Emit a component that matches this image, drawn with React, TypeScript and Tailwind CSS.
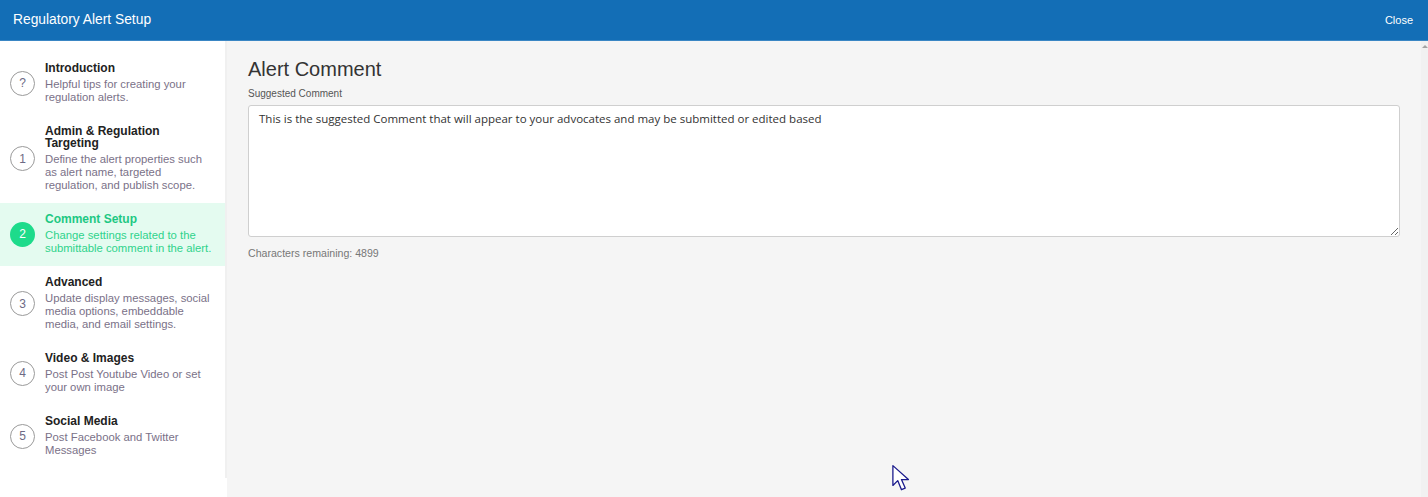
import React from 'react'

type Step = {
  badge: string
  title: string
  desc: string
  active?: boolean
}

const STEPS: Step[] = [
  { badge: '?', title: 'Introduction', desc: 'Helpful tips for creating your regulation alerts.' },
  {
    badge: '1',
    title: 'Admin & Regulation Targeting',
    desc: 'Define the alert properties such as alert name, targeted regulation, and publish scope.',
  },
  {
    badge: '2',
    title: 'Comment Setup',
    desc: 'Change settings related to the submittable comment in the alert.',
    active: true,
  },
  {
    badge: '3',
    title: 'Advanced',
    desc: 'Update display messages, social media options, embeddable media, and email settings.',
  },
  { badge: '4', title: 'Video & Images', desc: 'Post Post Youtube Video or set your own image' },
  { badge: '5', title: 'Social Media', desc: 'Post Facebook and Twitter Messages' },
]

function StepItem({ step }: { step: Step }) {
  return (
    <div
      className={
        step.active
          ? 'flex items-center bg-[#e4fbf0] pb-[11px] pl-[10px] pt-[10px]'
          : 'flex items-center pb-[11px] pl-[10px] pt-[10px]'
      }
    >
      <div
        className={
          step.active
            ? 'flex h-[25px] w-[25px] shrink-0 items-center justify-center rounded-full bg-[#1ddb8b] text-[12px] text-white'
            : 'flex h-[25px] w-[25px] shrink-0 items-center justify-center rounded-full border border-[#9a9a9a] text-[12px] text-[#6d6a85]'
        }
      >
        {step.badge}
      </div>
      <div className="ml-[10px] w-[168px]">
        <div
          className={
            step.active
              ? 'text-[12px] font-bold leading-[12px] text-[#1dc883]'
              : 'text-[12px] font-bold leading-[12px] text-[#222]'
          }
        >
          {step.title}
        </div>
        <div
          className={
            step.active
              ? 'mt-[4px] text-[11.3px] leading-[13px] text-[#2fd38c]'
              : 'mt-[4px] text-[11.3px] leading-[13px] text-[#7a7188]'
          }
        >
          {step.desc}
        </div>
      </div>
    </div>
  )
}

export default function App() {
  return (
    <div
      className="flex h-[497px] w-[1428px] flex-col overflow-hidden bg-white"
      style={{ fontFamily: '"Liberation Sans", Arial, sans-serif' }}
    >
      <header className="flex h-[41px] shrink-0 items-center justify-between border-b border-[#3a86c4] bg-[#136eb6] pl-[13px] pr-[15px]">
        <span className="text-[13.8px] text-white">Regulatory Alert Setup</span>
        <span className="text-[11px] text-white">Close</span>
      </header>

      <div className="flex min-h-0 flex-1">
        <aside className="w-[227px] shrink-0 self-start border-r-2 border-[#f0f0f0] bg-white pb-[10px] pt-[11px]">
          <div className="flex flex-col">
            {STEPS.map((s) => (
              <StepItem key={s.title} step={s} />
            ))}
          </div>
        </aside>

        <main className="relative min-w-0 flex-1 bg-[#f5f5f5] pl-[21px] pr-[21px] pt-[17px]">
          <h1 className="text-[20px] leading-[22px] text-[#333]">Alert Comment</h1>
          <label className="mt-[8px] block text-[10px] leading-[12px] text-[#555]">Suggested Comment</label>
          <textarea
            className="mt-[5px] block h-[132px] w-full resize-y rounded-[3px] border border-[#cfcfcf] bg-white px-[10px] py-[5px] text-[11.5px] leading-[15px] text-[#333] outline-none"
            style={{ fontFamily: '"Open Sans", "Liberation Sans", sans-serif' }}
            defaultValue="This is the suggested Comment that will appear to your advocates and may be submitted or edited based"
          />
          <div className="mt-[10px] text-[10.6px] leading-[13px] text-[#777]">Characters remaining: 4899</div>

          <svg
            className="absolute left-[664px] top-[423px]"
            width="22"
            height="30"
            viewBox="0 0 20 28"
          >
            <path
              d="M1.5 1.5 L1.5 20 L6 15.5 L9.5 24 L13 22.5 L9.5 14.5 L16 14.5 Z"
              fill="white"
              stroke="#1a1a8c"
              strokeWidth="1.2"
              strokeLinejoin="round"
            />
          </svg>
        </main>

        <div className="w-[7px] shrink-0 bg-[#f1f1f1] pt-[4px]">
          <div className="mx-auto h-0 w-0 border-x-[3px] border-b-[3px] border-x-transparent border-b-[#a3a3a3]" />
        </div>
      </div>
    </div>
  )
}
